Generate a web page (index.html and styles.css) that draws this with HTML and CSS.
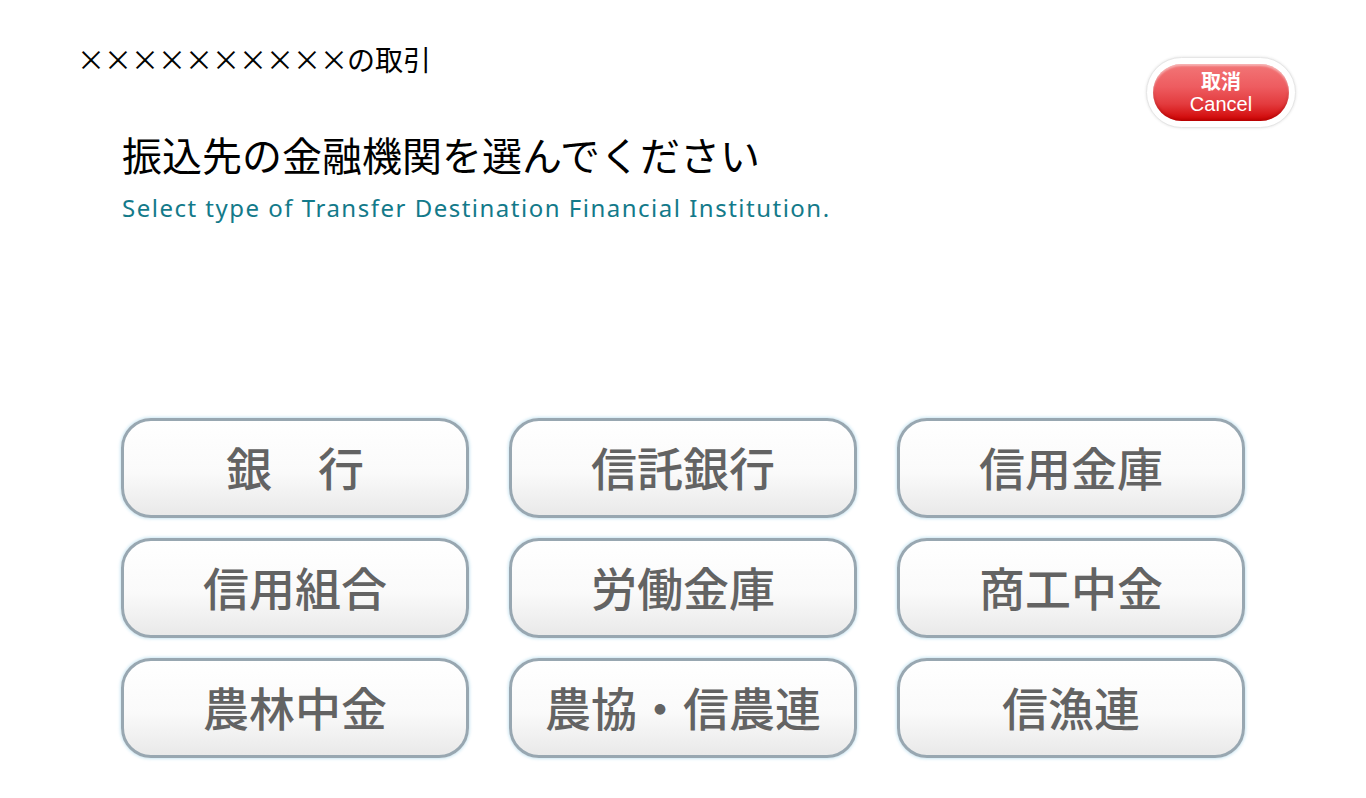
FILE: index.html
```html
<!DOCTYPE html>
<html lang="ja">
<head>
    <meta charset="UTF-8">
    <meta name="viewport" content="width=device-width, initial-scale=1.0">
    <title>振込先の金融機関</title>
    <link rel="stylesheet" href="styles.css">
</head>
<body>
    <div class="screen">
        <div class="top-bar">
            <div class="trade-title"><span class="marks">××××××××××</span>の取引</div>
            <div class="cancel-wrap">
                <button class="cancel-btn">
                    <span class="cancel-ja">取消</span>
                    <span class="cancel-en">Cancel</span>
                </button>
            </div>
        </div>

        <div class="heading">
            <h1>振込先の金融機関を選んでください</h1>
            <p class="heading-en">Select type of Transfer Destination Financial Institution.</p>
        </div>

        <div class="choices">
            <button class="choice">銀　行</button>
            <button class="choice">信託銀行</button>
            <button class="choice">信用金庫</button>
            <button class="choice">信用組合</button>
            <button class="choice">労働金庫</button>
            <button class="choice">商工中金</button>
            <button class="choice">農林中金</button>
            <button class="choice">農協・信農連</button>
            <button class="choice">信漁連</button>
        </div>
    </div>
</body>
</html>
```

FILE: styles.css
```css
body {
    margin: 0;
    background: #fff;
    font-family: "Noto Sans CJK JP", "Noto Sans", sans-serif;
    color: #000;
}

.screen {
    width: 1366px;
    height: 798px;
    overflow: hidden;
}

.top-bar {
    display: flex;
    justify-content: space-between;
    align-items: flex-start;
    padding: 40px 70px 0 77px;
    height: 88px;
}

.trade-title {
    font-size: 28px;
    line-height: 38px;
}

.marks {
    letter-spacing: -1px;
}

.cancel-wrap {
    margin-top: 17px;
    padding: 6px;
    border-radius: 36px;
    background: #fff;
    border: 1px solid #e6e6e6;
    box-shadow: 0 0 3px rgba(0, 0, 0, 0.12);
}

.cancel-btn {
    display: flex;
    flex-direction: column;
    align-items: center;
    justify-content: center;
    width: 136px;
    height: 57px;
    padding: 0 0 2px;
    border: none;
    border-radius: 29px;
    background: linear-gradient(to bottom, #f27677 0%, #ee5c60 40%, #e33b3e 70%, #cf0202 100%);
    box-shadow: inset 0 2px 2px rgba(255, 255, 255, 0.45), inset 0 -2px 3px rgba(150, 0, 0, 0.4);
    color: #fff;
    font-family: "Noto Sans CJK JP", sans-serif;
    cursor: pointer;
}

.cancel-ja {
    font-size: 20px;
    font-weight: bold;
    line-height: 24px;
}

.cancel-en {
    font-family: "Liberation Sans", Arial, sans-serif;
    font-size: 20px;
    line-height: 22px;
}

.heading {
    padding-left: 122px;
}

.heading h1 {
    margin: 0;
    font-size: 40px;
    font-weight: normal;
    line-height: 52px;
}

.heading-en {
    margin: 14px 0 0;
    font-family: "Noto Sans", sans-serif;
    font-size: 24px;
    letter-spacing: 1.5px;
    line-height: 28px;
    color: #137a8a;
}

.choices {
    display: grid;
    grid-template-columns: repeat(3, 348px);
    grid-auto-rows: 100px;
    column-gap: 40px;
    row-gap: 20px;
    margin: 196px 0 0 121px;
}

.choice {
    padding: 0 0 5px;
    border: 3px solid #98a7b1;
    border-radius: 30px;
    background: linear-gradient(to bottom, #ffffff 0%, #fafafa 55%, #e9e9e9 100%);
    box-shadow: 0 0 3px 1px rgba(190, 225, 240, 0.8);
    color: #636363;
    font-family: "Noto Sans CJK JP", sans-serif;
    font-size: 46px;
    font-weight: 500;
    cursor: pointer;
}
```
